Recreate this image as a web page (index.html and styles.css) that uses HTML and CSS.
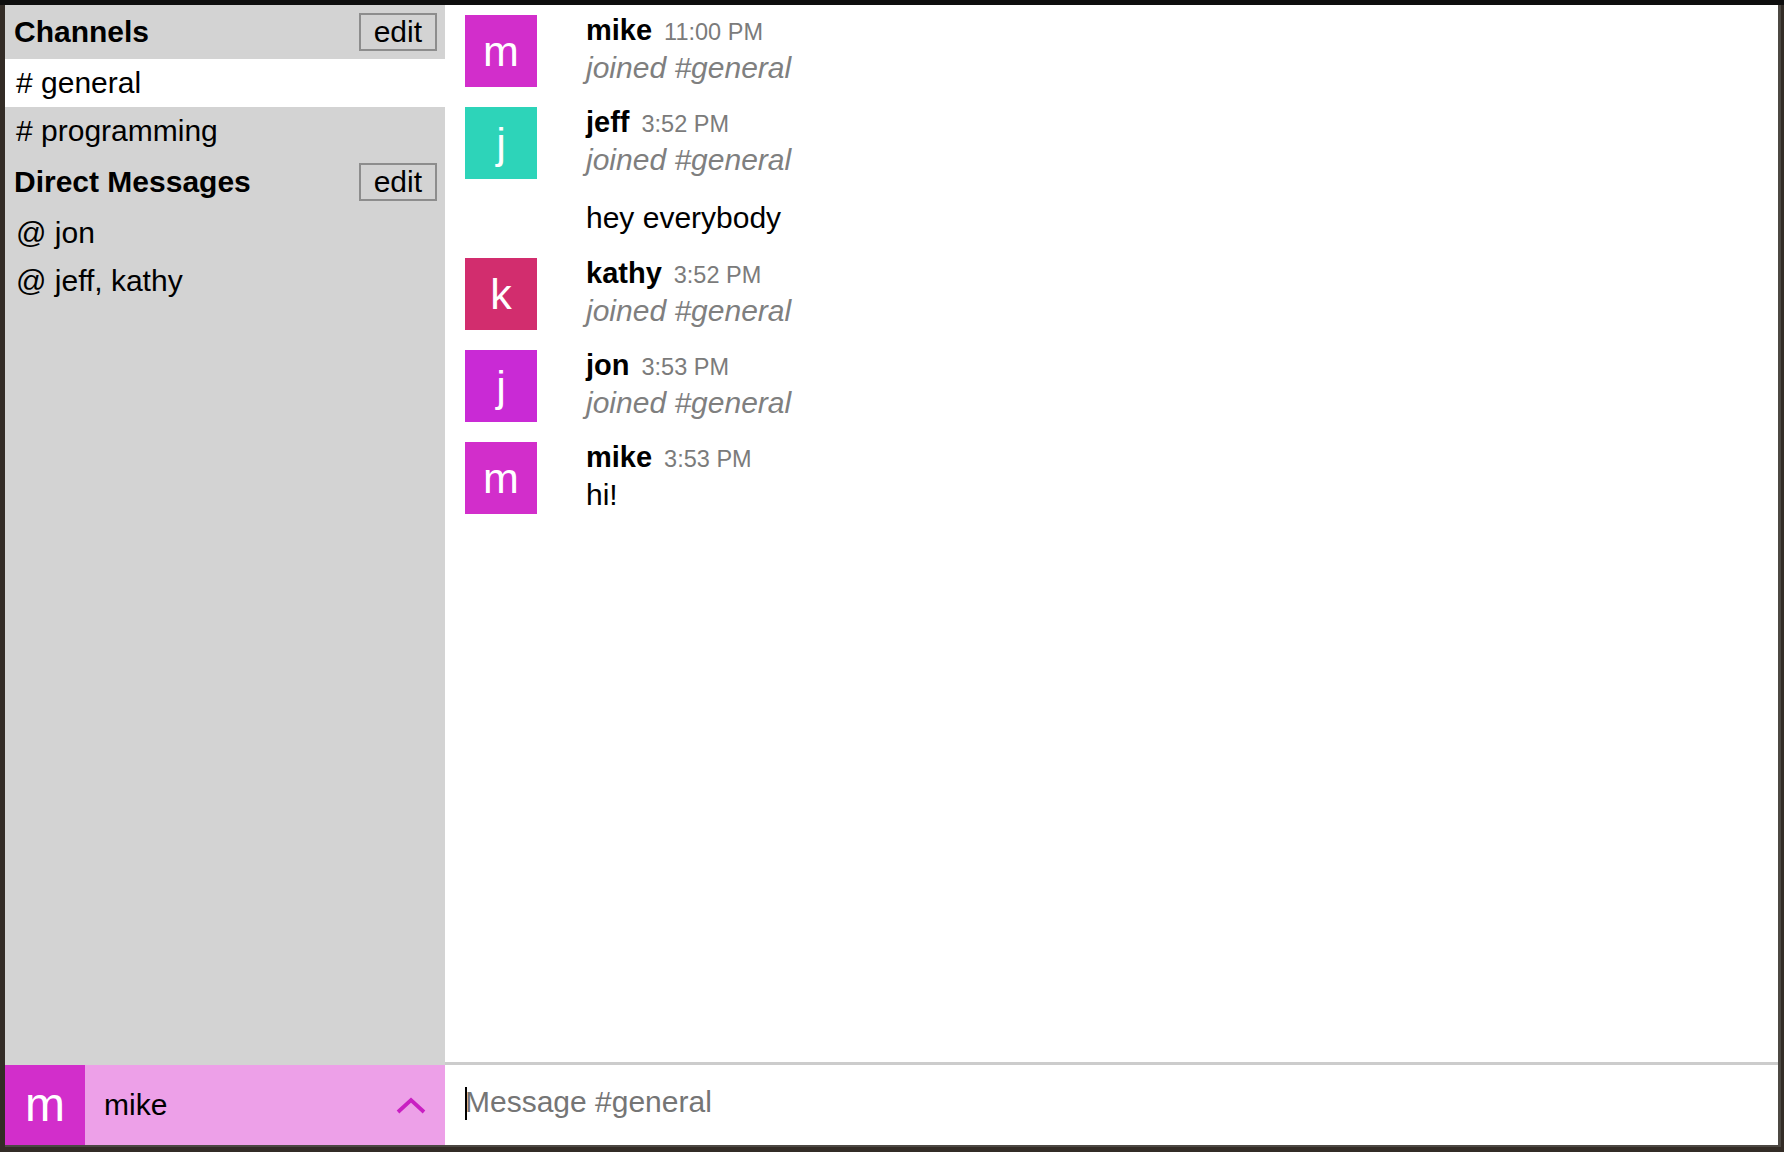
FILE: index.html
```html
<!DOCTYPE html>
<html lang="en">

<head>
    <meta charset="UTF-8">
    <meta name="viewport" content="width=device-width, initial-scale=1.0">
    <title>Chat</title>
    <link rel="stylesheet" href="styles.css">
</head>

<body>
    <div class="app">
        <aside class="sidebar">
            <div class="section-head">
                <span>Channels</span>
                <button type="button" class="edit-btn">edit</button>
            </div>
            <ul class="nav-list">
                <li class="nav-item active"># general</li>
                <li class="nav-item"># programming</li>
            </ul>
            <div class="section-head">
                <span>Direct Messages</span>
                <button type="button" class="edit-btn">edit</button>
            </div>
            <ul class="nav-list">
                <li class="nav-item">@ jon</li>
                <li class="nav-item">@ jeff, kathy</li>
            </ul>
            <div class="user-bar">
                <div class="user-avatar">m</div>
                <span class="user-name">mike</span>
                <svg class="chevron" width="30" height="18" viewBox="0 0 30 18">
                    <polyline points="2,16 15,4 28,16" fill="none" stroke="#c91fc2" stroke-width="3.8" />
                </svg>
            </div>
        </aside>

        <main class="main">
            <div class="messages">
                <div class="msg">
                    <div class="avatar magenta">m</div>
                    <div class="msg-body">
                        <div class="msg-head"><span class="author">mike</span><span class="time">11:00 PM</span></div>
                        <div class="msg-text joined">joined #general</div>
                    </div>
                </div>
                <div class="msg">
                    <div class="avatar teal">j</div>
                    <div class="msg-body">
                        <div class="msg-head"><span class="author">jeff</span><span class="time">3:52 PM</span></div>
                        <div class="msg-text joined">joined #general</div>
                    </div>
                </div>
                <div class="msg-cont">hey everybody</div>
                <div class="msg">
                    <div class="avatar rose">k</div>
                    <div class="msg-body">
                        <div class="msg-head"><span class="author">kathy</span><span class="time">3:52 PM</span></div>
                        <div class="msg-text joined">joined #general</div>
                    </div>
                </div>
                <div class="msg">
                    <div class="avatar purple">j</div>
                    <div class="msg-body">
                        <div class="msg-head"><span class="author">jon</span><span class="time">3:53 PM</span></div>
                        <div class="msg-text joined">joined #general</div>
                    </div>
                </div>
                <div class="msg">
                    <div class="avatar magenta">m</div>
                    <div class="msg-body">
                        <div class="msg-head"><span class="author">mike</span><span class="time">3:53 PM</span></div>
                        <div class="msg-text">hi!</div>
                    </div>
                </div>
            </div>
            <form class="composer">
                <input type="text" class="composer-input" placeholder="Message #general" autofocus>
            </form>
        </main>
    </div>
</body>

</html>
```

FILE: styles.css
```css
html,
body {
    margin: 0;
    height: 100%;
}

body {
    font-family: "Liberation Sans", Arial, sans-serif;
    background: linear-gradient(#0e0e0e 5px, #332c26 5px);
    overflow: hidden;
}

.app {
    display: flex;
    width: 1773px;
    height: 1140px;
    margin: 5px 0 0 5px;
    background: #ffffff;
    border-right: 3px solid #4c4843;
    border-bottom: 2px solid #4c4843;
}

/* sidebar */

.sidebar {
    display: flex;
    flex-direction: column;
    width: 440px;
    background: #d3d3d3;
}

.section-head {
    display: flex;
    align-items: center;
    justify-content: space-between;
    height: 54px;
    padding: 0 8px 0 9px;
    font-size: 30px;
    font-weight: bold;
}

.edit-btn {
    height: 38px;
    padding: 0 13px;
    font-family: inherit;
    font-size: 30px;
    line-height: 34px;
    color: #000;
    background: transparent;
    border: 2px solid #8d8d8d;
}

.nav-list {
    list-style: none;
    margin: 0;
    padding: 0;
}

.nav-item {
    height: 48px;
    padding-left: 11px;
    font-size: 30px;
    line-height: 48px;
}

.nav-item.active {
    background: #ffffff;
}

.user-bar {
    display: flex;
    align-items: center;
    height: 80px;
    margin-top: auto;
    background: #eda0e8;
}

.user-avatar {
    width: 80px;
    height: 80px;
    font-size: 48px;
    line-height: 80px;
    text-align: center;
    color: #fff;
    background: #d22ecb;
}

.user-name {
    flex: 1;
    padding-left: 19px;
    font-size: 30px;
}

.chevron {
    margin-right: 19px;
}

/* main */

.main {
    display: flex;
    flex-direction: column;
    flex: 1;
}

.messages {
    flex: 1;
    padding: 10px 20px;
}

.msg {
    display: flex;
    margin-bottom: 20px;
}

.avatar {
    width: 72px;
    height: 72px;
    flex-shrink: 0;
    font-size: 43px;
    line-height: 72px;
    text-align: center;
    color: #fff;
}

.magenta {
    background: #d22ecb;
}

.teal {
    background: #2dd4b9;
}

.rose {
    background: #d22d6e;
}

.purple {
    background: #c92ad5;
}

.msg-body {
    margin: -1px 0 0 49px;
}

.author {
    font-size: 29px;
    font-weight: bold;
}

.time {
    margin-left: 12px;
    font-size: 23.5px;
    color: #7b7b7b;
}

.msg-text {
    margin-top: 4px;
    font-size: 30px;
}

.joined {
    font-style: italic;
    color: #7f7f7f;
}

.msg-cont {
    padding: 2px 0 3px 121px;
    margin-bottom: 20px;
    font-size: 30px;
}

.composer {
    position: relative;
    margin: 0;
    border-top: 3px solid #cccccc;
}

.composer::before {
    content: "";
    position: absolute;
    left: 20px;
    top: 22px;
    width: 2px;
    height: 33px;
    background: #000;
}

.composer-input {
    display: block;
    width: 100%;
    height: 80px;
    box-sizing: border-box;
    padding: 20px 20px 26px;
    font-family: inherit;
    font-size: 30px;
    line-height: 34px;
    border: none;
    outline: none;
    caret-color: transparent;
}

.composer-input::placeholder {
    color: #757575;
}
```
